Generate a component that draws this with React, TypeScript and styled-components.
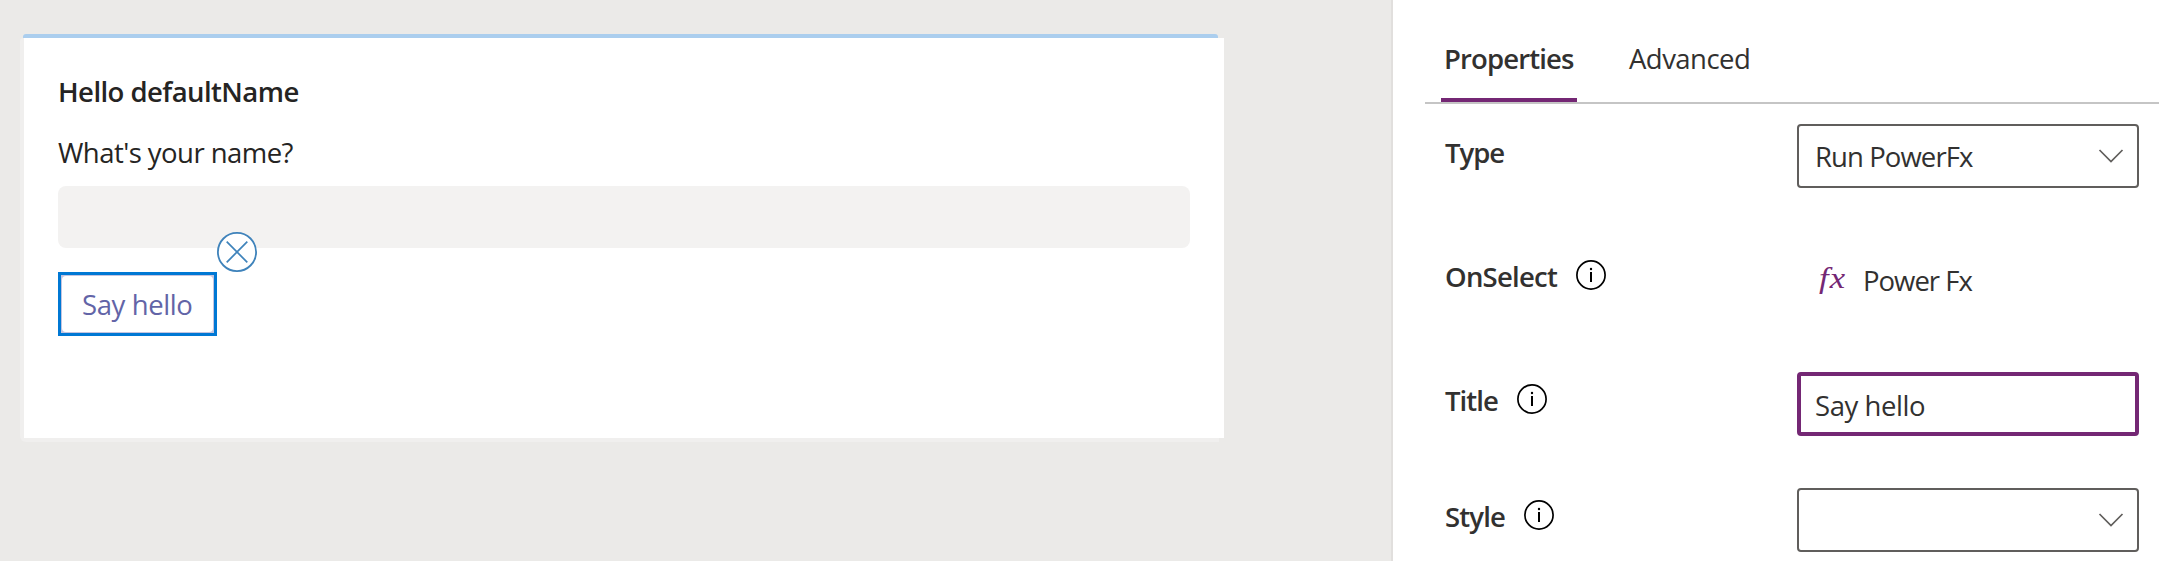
import React from "react";
import styled, { createGlobalStyle, css } from "styled-components";

const GlobalStyle = createGlobalStyle`
  *, *::before, *::after { box-sizing: border-box; }
  html, body { margin: 0; background: #fff; overflow: hidden; }
`;

const Screen = styled.div`
  display: flex;
  width: 2164px;
  height: 561px;
  overflow: hidden;
  background: #fff;
  color: #323130;
  font: 400 27.5px/37px "Open Sans", "Noto Sans", sans-serif;
`;

const Canvas = styled.main`
  width: 1393px;
  flex: none;
  padding: 34px 0 0 20px;
  background: #ebeae8;
  border-right: 2px solid #e1dfdd;
`;

const Card = styled.section`
  width: 1204px;
`;

const CardAccent = styled.div`
  width: 1195px;
  height: 4px;
  margin-left: 3px;
  background: #abceee;
  border-radius: 3px 3px 0 0;
`;

const CardEdge = styled.div`
  padding: 0 0 4px 4px;
  background: linear-gradient(#f0efee, #f0efee) 0 0 / 1199px 100% no-repeat;
  border-radius: 3px 0 0 6px;
`;

const CardBody = styled.div`
  display: flex;
  flex-direction: column;
  align-items: flex-start;
  height: 400px;
  padding: 35px 34px 0;
  background: #fff;
  color: #252423;
`;

const Text = styled.span<{ $track: number; $bold?: boolean; $indent?: number }>`
  display: block;
  white-space: nowrap;
  letter-spacing: ${(p) => p.$track}px;
  font-weight: ${(p) => (p.$bold ? 600 : 400)};
  margin-left: ${(p) => p.$indent ?? 0}px;
`;

const Question = styled.div`
  margin: 24px 0 15px;
`;

const AnswerBox = styled.div`
  width: 1132px;
  height: 62px;
  border-radius: 8px;
  background: #f3f2f1;
`;

const ActionFrame = styled.div`
  position: relative;
  width: 159px;
  height: 64px;
  margin-top: 24px;
  border: 3px solid #0078d4;
  background: #c4c4df;
`;

const ActionButton = styled.button`
  display: block;
  width: 151px;
  height: 56px;
  margin: 1px;
  padding: 0 0 0 20px;
  border: 0;
  border-radius: 4px;
  background: #fff;
  color: #6264a7;
  font: inherit;
  text-align: left;
`;

const RemoveBadge = styled.svg`
  position: absolute;
  top: -43px;
  right: -43px;
  width: 40px;
  height: 40px;
  fill: none;
  stroke: #3f83bb;
`;

const Panel = styled.aside`
  flex: 1;
  padding: 40px 5px 0 32px;
`;

const Tabs = styled.nav`
  display: flex;
  gap: 40px;
  height: 64px;
  padding-left: 16px;
  border-bottom: 2px solid #c5c5c5;
`;

const Tab = styled.div<{ $active?: boolean }>`
  height: 62px;
  padding: 0 3px;
  ${(p) =>
    p.$active &&
    css`
      width: 136px;
      border-bottom: 4px solid #742774;
    `}
`;

const Field = styled.div<{ $gap: number }>`
  display: grid;
  grid-template-columns: 352px 342px;
  height: 64px;
  margin: ${(p) => p.$gap}px 0 0 20px;
`;

const Label = styled.div`
  display: flex;
  height: 47px;
  padding-top: 10px;
`;

const InfoSvg = styled.svg`
  flex: none;
  width: 30px;
  height: 30px;
  margin: 2px 0 0 19px;
`;

const Input = styled.div<{ $focused?: boolean }>`
  display: flex;
  justify-content: space-between;
  height: 64px;
  padding: ${(p) => (p.$focused ? "11px 14px" : "12px 14px 0 16px")};
  border: ${(p) => (p.$focused ? "4px solid #742774" : "2px solid #605e5c")};
  border-radius: 4px;
`;

const ChevronSvg = styled.svg`
  width: 26px;
  height: 16px;
  margin: 10px -1px 0 auto;
  fill: none;
  stroke: #605e5c;
  stroke-width: 1.7;
`;

const Formula = styled.div`
  display: flex;
  padding: 14px 0 0 22px;
`;

const Fx = styled.i`
  width: 44px;
  margin-top: -3px;
  color: #742774;
  font: italic 30px/37px "Liberation Serif", serif;
  letter-spacing: 1px;
  transform: scaleX(1.15);
  transform-origin: left center;
`;

const Info = () => (
  <InfoSvg viewBox="0 0 30 30">
    <circle cx="15" cy="15" r="14.1" fill="none" stroke="#000" strokeWidth="1.7" />
    <path d="M15 12v10" stroke="#000" strokeWidth="2" />
    <circle cx="15" cy="9" r="1.2" fill="#000" />
  </InfoSvg>
);

const Chevron = () => (
  <ChevronSvg viewBox="0 0 26 16">
    <path d="M1.5 2 13 13.5 24.5 2" />
  </ChevronSvg>
);

export default function App() {
  return (
    <Screen>
      <GlobalStyle />
      <Canvas>
        <Card>
          <CardAccent />
          <CardEdge>
            <CardBody>
              <Text $bold $track={-0.56}>Hello defaultName</Text>
              <Question>
                <Text $track={-0.54}>What's your name?</Text>
              </Question>
              <AnswerBox />
              <ActionFrame>
                <ActionButton>
                  <Text $track={-0.4}>Say hello</Text>
                </ActionButton>
                <RemoveBadge viewBox="0 0 40 40">
                  <circle cx="20" cy="20" r="19.1" fill="#fff" strokeWidth="1.8" />
                  <path d="M9.7 9.7 30.3 30.3M30.3 9.7 9.7 30.3" strokeWidth="1.7" />
                </RemoveBadge>
              </ActionFrame>
            </CardBody>
          </CardEdge>
        </Card>
      </Canvas>
      <Panel>
        <Tabs>
          <Tab $active>
            <Text $bold $track={-0.86}>Properties</Text>
          </Tab>
          <Tab>
            <Text $track={-0.53} $indent={9}>Advanced</Text>
          </Tab>
        </Tabs>
        <Field $gap={20}>
          <Label>
            <Text $bold $track={-1}>Type</Text>
          </Label>
          <Input>
            <Text $track={-0.91}>Run PowerFx</Text>
            <Chevron />
          </Input>
        </Field>
        <Field $gap={60}>
          <Label>
            <Text $bold $track={-0.75}>OnSelect</Text>
            <Info />
          </Label>
          <Formula>
            <Fx>fx</Fx>
            <Text $track={-1}>Power Fx</Text>
          </Formula>
        </Field>
        <Field $gap={60}>
          <Label>
            <Text $bold $track={-0.94}>Title</Text>
            <Info />
          </Label>
          <Input $focused>
            <Text $track={-0.43}>Say hello</Text>
          </Input>
        </Field>
        <Field $gap={52}>
          <Label>
            <Text $bold $track={-0.85}>Style</Text>
            <Info />
          </Label>
          <Input>
            <Chevron />
          </Input>
        </Field>
      </Panel>
    </Screen>
  );
}
